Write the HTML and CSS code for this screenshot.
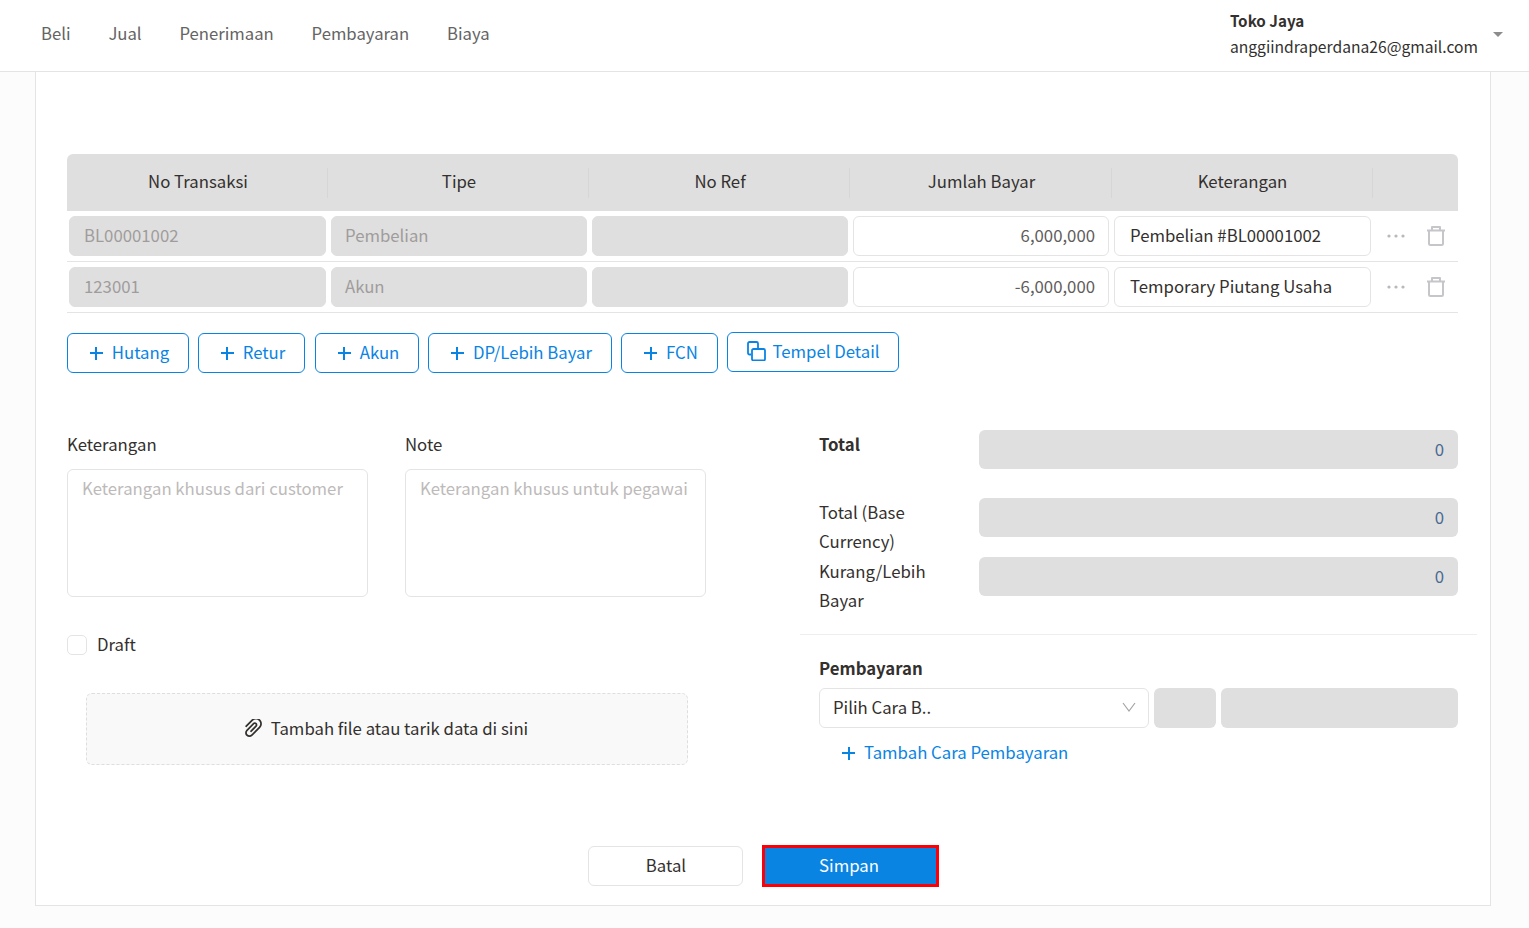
FILE: index.html
```html
<!DOCTYPE html>
<html lang="id">
<head>
    <meta charset="UTF-8">
    <meta name="viewport" content="width=device-width, initial-scale=1.0">
    <title>Pembayaran</title>
    <link rel="stylesheet" href="styles.css">
</head>
<body>
    <nav class="nav-bar">
        <div class="nav-links">
            <a href="#">Beli</a>
            <a href="#">Jual</a>
            <a href="#">Penerimaan</a>
            <a href="#">Pembayaran</a>
            <a href="#">Biaya</a>
        </div>
        <div class="account">
            <div class="account-text">
                <strong>Toko Jaya</strong>
                <span>anggiindraperdana26@gmail.com</span>
            </div>
            <span class="caret"></span>
        </div>
    </nav>

    <div class="card">
        <div class="table">
            <div class="table-head">
                <div class="th">No Transaksi</div>
                <div class="th">Tipe</div>
                <div class="th">No Ref</div>
                <div class="th">Jumlah Bayar</div>
                <div class="th">Keterangan</div>
                <div class="th th-last"></div>
            </div>
            <div class="table-row">
                <div class="field field-off">BL00001002</div>
                <div class="field field-off">Pembelian</div>
                <div class="field field-off"></div>
                <div class="field field-num">6,000,000</div>
                <div class="field">Pembelian #BL00001002</div>
                <div class="row-actions">
                    <svg class="icon-more" width="18" height="4" viewBox="0 0 18 4" fill="#b8b8bd"><circle cx="2" cy="2" r="1.6"/><circle cx="9" cy="2" r="1.6"/><circle cx="16" cy="2" r="1.6"/></svg>
                    <svg class="icon-trash" width="18" height="20" viewBox="0 0 18 20" fill="none" stroke="#c6c6ca" stroke-width="2" stroke-linejoin="round"><path d="M0 4.500h18M2 4.500v13A1.500 1.500 0 0 0 3.500 19h11a1.500 1.500 0 0 0 1.500-1.500v-13M5 4.500V1h8v3.500"/></svg>
                </div>
            </div>
            <div class="table-row">
                <div class="field field-off">123001</div>
                <div class="field field-off">Akun</div>
                <div class="field field-off"></div>
                <div class="field field-num">-6,000,000</div>
                <div class="field">Temporary Piutang Usaha</div>
                <div class="row-actions">
                    <svg class="icon-more" width="18" height="4" viewBox="0 0 18 4" fill="#b8b8bd"><circle cx="2" cy="2" r="1.6"/><circle cx="9" cy="2" r="1.6"/><circle cx="16" cy="2" r="1.6"/></svg>
                    <svg class="icon-trash" width="18" height="20" viewBox="0 0 18 20" fill="none" stroke="#c6c6ca" stroke-width="2" stroke-linejoin="round"><path d="M0 4.500h18M2 4.500v13A1.500 1.500 0 0 0 3.500 19h11a1.500 1.500 0 0 0 1.500-1.500v-13M5 4.500V1h8v3.500"/></svg>
                </div>
            </div>
        </div>

        <div class="add-buttons">
            <button class="btn-outline btn-hutang"><span class="plus"></span>Hutang</button>
            <button class="btn-outline btn-retur"><span class="plus"></span>Retur</button>
            <button class="btn-outline btn-akun"><span class="plus"></span>Akun</button>
            <button class="btn-outline btn-dp"><span class="plus"></span>DP/Lebih Bayar</button>
            <button class="btn-outline btn-fcn"><span class="plus"></span>FCN</button>
            <button class="btn-outline btn-paste">
                <svg width="19" height="20" viewBox="0 0 19 20" fill="none" stroke="#0984e3" stroke-width="1.800" stroke-linejoin="round"><path d="M4 13.500H2.500A1.500 1.500 0 0 1 1 12V2.500A1.500 1.500 0 0 1 2.500 1h7A1.500 1.500 0 0 1 11 2.500V7"/><rect x="5" y="8" width="13" height="11.500" rx="1.500"/></svg>
                Tempel Detail
            </button>
        </div>

        <div class="form-area">
            <div class="form-left">
                <div class="notes">
                    <div class="note-col">
                        <label>Keterangan</label>
                        <div class="textarea">Keterangan khusus dari customer</div>
                    </div>
                    <div class="note-col">
                        <label>Note</label>
                        <div class="textarea">Keterangan khusus untuk pegawai</div>
                    </div>
                </div>
                <div class="draft"><span class="checkbox"></span><span class="draft-label">Draft</span></div>
                <div class="upload">
                    <svg width="17" height="18" viewBox="174 174 676 724" fill="#33302e"><path d="M779.3 196.6c-94.2-94.2-247.6-94.2-341.7 0l-261 260.8c-1.7 1.7-2.6 4-2.6 6.4s.9 4.7 2.6 6.4l36.9 36.9a9 9 0 0 0 12.7 0l261-260.8c32.4-32.4 75.5-50.2 121.3-50.2s88.9 17.8 121.2 50.2c32.4 32.4 50.2 75.5 50.2 121.2 0 45.8-17.8 88.8-50.2 121.2l-266 265.9-43.1 43.1c-40.3 40.3-105.8 40.3-146.1 0-19.5-19.5-30.2-45.4-30.2-73s10.7-53.5 30.2-73l263.9-263.8c6.7-6.6 15.5-10.3 24.9-10.3h.1c9.4 0 18.1 3.700 24.700 10.300 6.700 6.700 10.300 15.500 10.300 24.900 0 9.300-3.700 18.100-10.300 24.700L372.400 653c-1.700 1.700-2.600 4-2.600 6.400s.9 4.700 2.600 6.400l36.900 36.900a9 9 0 0 0 12.700 0l215.600-215.600c19.900-19.900 30.800-46.300 30.800-74.400s-11-54.600-30.800-74.400c-41.100-41.100-107.900-41-149 0L463 364 224.800 602.100A172.220 172.220 0 0 0 174 724.800c0 46.300 18.100 89.800 50.800 122.500 33.900 33.800 78.300 50.700 122.700 50.700 44.400 0 88.800-16.900 122.600-50.700l309.200-309C824.800 492.700 850 432 850 367.500c.1-64.600-25.100-125.300-70.700-170.900z"/></svg>
                    Tambah file atau tarik data di sini
                </div>
            </div>

            <div class="form-right">
                <div class="totals">
                    <div class="total-row total-main">
                        <div class="total-label"><strong>Total</strong></div>
                        <div class="total-value">0</div>
                    </div>
                    <div class="total-row total-base">
                        <div class="total-label">Total (Base Currency)</div>
                        <div class="total-value">0</div>
                    </div>
                    <div class="total-row total-diff">
                        <div class="total-label">Kurang/Lebih Bayar</div>
                        <div class="total-value">0</div>
                    </div>
                </div>
                <div class="payment">
                    <div class="payment-title">Pembayaran</div>
                    <div class="payment-row">
                        <div class="select">
                            Pilih Cara B..
                            <svg width="14" height="10" viewBox="0 0 14 10" fill="none" stroke="#a5a5a8" stroke-width="1.200"><path d="M1 1l6 8 6-8"/></svg>
                        </div>
                        <div class="pay-off pay-small"></div>
                        <div class="pay-off pay-large"></div>
                    </div>
                    <a class="add-payment" href="#"><span class="plus"></span>Tambah Cara Pembayaran</a>
                </div>
            </div>
        </div>

        <div class="form-actions">
            <button class="btn-cancel">Batal</button>
            <button class="btn-save">Simpan</button>
        </div>
    </div>
</body>
</html>
```

FILE: styles.css
```css
:root {
    --blue: #0984e3;
    --text: #33302e;
    --muted: #a09c9c;
    --line: #e4e4e4;
    --off-bg: #dfdfdf;
}

* {
    box-sizing: border-box;
}

body {
    margin: 0;
    font-family: "Noto Sans CJK JP", "Noto Sans", sans-serif;
    font-size: 16.75px;
    line-height: 28px;
    color: var(--text);
    background-color: #fcfcfc;
}

.nav-bar {
    display: flex;
    justify-content: space-between;
    height: 72px;
    padding: 0 26px 0 41px;
    background-color: white;
    border-bottom: 1px solid var(--line);
}

.nav-links {
    display: flex;
    align-items: center;
    gap: 37.85px;
    padding-bottom: 6px;
    font-size: 16.7px;
}

.nav-links a {
    color: #646464;
    text-decoration: none;
}

.account {
    display: flex;
    gap: 15px;
    padding-top: 7px;
}

.account-text {
    display: flex;
    flex-direction: column;
    gap: 1px;
    font-size: 15.65px;
    line-height: 26px;
}

.account-text strong {
    font-weight: 700;
    font-size: 15.2px;
}

.caret {
    width: 0;
    height: 0;
    margin-top: 25px;
    border-left: 5px solid transparent;
    border-right: 5px solid transparent;
    border-top: 5px solid #8c8c8c;
}

.card {
    width: 1456px;
    height: 834px;
    margin-left: 35px;
    padding: 82px 32px 0 31px;
    background-color: white;
    border: 1px solid var(--line);
    border-top: 0;
}

.table-head,
.table-row {
    display: grid;
    grid-template-columns: 261px 261px 261px 261px 262px 85px;
}

.table-head {
    height: 57px;
    align-items: center;
    background-color: var(--off-bg);
    border-radius: 6px 6px 0 0;
}

.th {
    height: 30px;
    padding-left: 2px;
    text-align: center;
    line-height: 26px;
    border-right: 1px solid #d6d6d6;
}

.th:nth-child(4) {
    width: 262px;
}

.th-last {
    border-right: 0;
}

.table-row {
    height: 51px;
    padding-top: 5px;
    border-bottom: 1px solid var(--line);
}

.field {
    width: 256px;
    height: 40px;
    margin-left: 3px;
    padding: 0 14px;
    line-height: 37px;
    background-color: white;
    border: 1px solid var(--line);
    border-radius: 6px;
}

.field:first-child {
    width: 257px;
    margin-left: 2px;
}

.field:nth-child(2) {
    padding-left: 13px;
}

.field:nth-child(5) {
    width: 257px;
    padding-left: 15px;
}

.field-off {
    color: var(--muted);
    background-color: var(--off-bg);
    border-color: var(--off-bg);
}

.field-num {
    padding-right: 13px;
    text-align: right;
    color: #5f5c5c;
}

.row-actions {
    display: flex;
    align-items: center;
    height: 40px;
    padding-left: 14px;
    gap: 22px;
}

.add-buttons {
    display: flex;
    gap: 9px;
    margin-top: 20px;
}

.btn-outline {
    display: flex;
    align-items: center;
    justify-content: center;
    height: 40px;
    padding: 0 0 2px 3px;
    font: inherit;
    color: var(--blue);
    background-color: white;
    border: 1px solid var(--blue);
    border-radius: 6px;
}

.btn-hutang { width: 122px; }
.btn-retur { width: 107px; margin-right: 1px; }
.btn-akun { width: 104px; }
.btn-dp { width: 184px; }
.btn-fcn { width: 97px; }

.btn-paste {
    width: 172px;
    gap: 6px;
    padding-left: 1px;
    transform: translateY(-1px);
}

.plus {
    flex: none;
    width: 13px;
    height: 13px;
    margin-top: 2px;
    margin-right: 9px;
    background: linear-gradient(var(--blue), var(--blue)) center / 100% 2px no-repeat,
                linear-gradient(var(--blue), var(--blue)) center / 2px 100% no-repeat;
}

.form-area {
    display: grid;
    grid-template-columns: 733px 658px;
    margin-top: 57px;
}

.notes {
    display: flex;
    gap: 37px;
}

.note-col {
    width: 301px;
}

.note-col label {
    display: block;
    margin-bottom: 11px;
}

.textarea {
    height: 128px;
    padding: 4px 14px;
    color: #bdbaba;
    white-space: nowrap;
    border: 1px solid var(--line);
    border-radius: 6px;
}

.draft {
    display: flex;
    align-items: center;
    gap: 10px;
    margin-top: 34px;
    height: 28px;
}

.draft-label {
    margin-bottom: 2px;
}

.checkbox {
    width: 20px;
    height: 20px;
    border: 1px solid var(--line);
    border-radius: 5px;
}

.upload {
    display: flex;
    align-items: center;
    justify-content: center;
    gap: 9px;
    width: 602px;
    height: 72px;
    margin: 34px 0 0 19px;
    padding: 0 1px 2px 0;
    background-color: #f9f9f9;
    border: 1px dashed #dedede;
    border-radius: 6px;
}

.totals {
    padding: 0 19px 22px;
    width: 677px;
    border-bottom: 1px solid #eeeeee;
}

.total-row {
    display: grid;
    grid-template-columns: 160px 479px;
}

.total-label {
    width: 130px;
    line-height: 29px;
}

.total-value {
    height: 39px;
    padding: 5px 14px;
    text-align: right;
    color: #4a6a92;
    background-color: var(--off-bg);
    border-radius: 6px;
}

.total-main {
    height: 68px;
}

.total-base {
    height: 59px;
}

.total-diff {
    height: 55px;
}

.payment {
    padding: 19px 0 0 19px;
}

.payment-title {
    font-weight: 700;
    height: 34px;
}

.payment-row {
    display: flex;
    gap: 5px;
}

.select {
    display: flex;
    align-items: center;
    justify-content: space-between;
    width: 330px;
    height: 40px;
    padding: 0 12px 2px 13px;
    border: 1px solid var(--line);
    border-radius: 6px;
}

.pay-off {
    height: 40px;
    background-color: var(--off-bg);
    border-radius: 6px;
}

.pay-small { width: 62px; }
.pay-large { width: 237px; }

.add-payment {
    display: flex;
    align-items: center;
    margin: 10px 0 0 23px;
    color: var(--blue);
    text-decoration: none;
}

.form-actions {
    display: flex;
    justify-content: center;
    align-items: center;
    gap: 19px;
    margin-top: 79px;
    padding-left: 1px;
}

.btn-cancel {
    width: 155px;
    height: 40px;
    padding: 0 0 2px 2px;
    font: inherit;
    color: var(--text);
    background-color: white;
    border: 1px solid var(--line);
    border-radius: 6px;
}

.btn-save {
    width: 177px;
    height: 42px;
    padding: 0 2px 2px 0;
    font: inherit;
    color: white;
    background-color: var(--blue);
    border: 3px solid #fb0007;
}
```
